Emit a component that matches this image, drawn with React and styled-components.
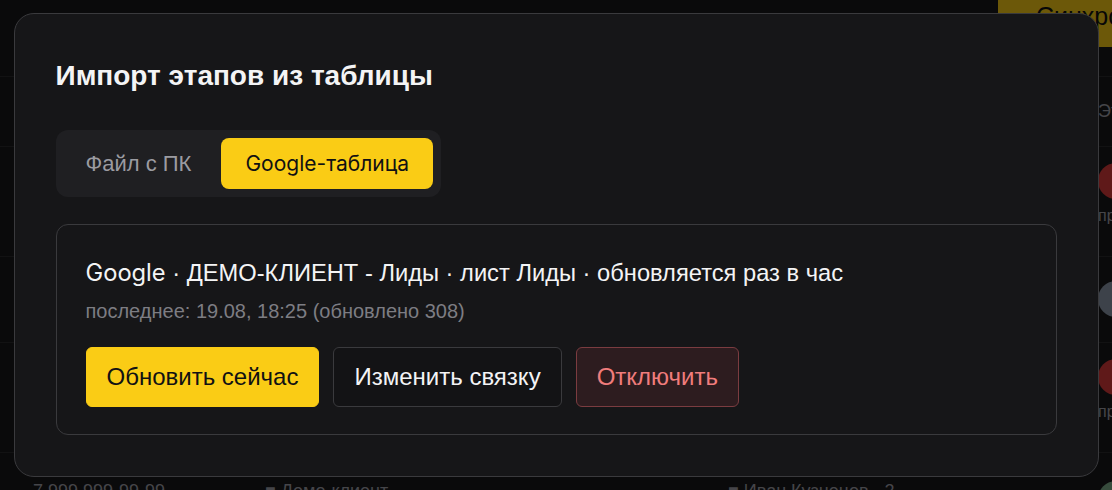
import React, { useState } from 'react';
import styled, { createGlobalStyle } from 'styled-components';
import { RefreshCw } from 'lucide-react';

const GlobalStyle = createGlobalStyle`
  html, body {
    margin: 0;
    padding: 0;
    background: #18181b;
    overflow: hidden;
  }
  body {
    font-family: "Liberation Sans", Arial, sans-serif;
    color: #f4f4f5;
  }
`;

/* --- page behind the dialog --- */

const Page = styled.div`
  width: 1240px;
  height: 490px;
  overflow: hidden;
  background: #18181b;
  display: flex;
  flex-direction: column;
  & > * {
    flex-shrink: 0;
  }
`;

const TopBar = styled.div`
  height: 77px;
  box-sizing: border-box;
  display: flex;
  align-items: flex-start;
  justify-content: flex-end;
  padding-right: 42px;
  border-bottom: 1px solid #2a2a2e;
`;

const SyncButton = styled.button`
  width: 200px;
  height: 47px;
  border: none;
  background: #facc15;
  color: #111;
  font-family: inherit;
  font-size: 25px;
  white-space: nowrap;
  overflow: hidden;
  display: flex;
  align-items: center;
  gap: 4px;
  padding: 0 0 14px 34px;
`;

const HeadRow = styled.div`
  height: 70px;
  box-sizing: border-box;
  display: grid;
  grid-template-columns: 1098px 1fr;
  align-items: center;
  border-bottom: 1px solid #2a2a2e;
  color: #a1a1aa;
  font-size: 18px;
`;

const Row = styled.div`
  height: ${p => p.$h}px;
  box-sizing: border-box;
  display: grid;
  grid-template-columns: 232px 463px 370px 1fr;
  padding-left: 33px;
  padding-top: ${p => p.$top}px;
  border-bottom: 1px solid #2a2a2e;
  font-size: 18px;
  color: #a1a1aa;
`;

const Cell = styled.div`
  white-space: nowrap;
`;

const Person = styled.div`
  display: flex;
  flex-direction: column;
  gap: 8px;
`;

const Avatar = styled.div`
  width: 36px;
  height: 36px;
  border-radius: 50%;
  background: ${p => p.$color};
`;

const Sub = styled.span`
  font-size: 16px;
  color: #a1a1aa;
`;

/* --- dialog --- */

const Overlay = styled.div`
  position: fixed;
  inset: 0;
  background: rgba(0, 0, 0, 0.57);
  display: flex;
  align-items: center;
  justify-content: center;
`;

const Dialog = styled.div`
  width: 1085px;
  height: 464px;
  box-sizing: border-box;
  background: #161618;
  border: 1px solid #3a3a3d;
  border-radius: 20px;
  padding: 37px 41px 40px 41px;
  display: flex;
  flex-direction: column;
`;

const Title = styled.h2`
  margin: 0;
  font-family: "Liberation Sans", Arial, sans-serif;
  font-weight: 700;
  font-size: 28px;
  line-height: 50px;
  color: #f4f4f5;
`;

const Tabs = styled.div`
  margin-top: 29px;
  align-self: flex-start;
  display: flex;
  gap: 8px;
  padding: 8px;
  background: #1f1f22;
  border-radius: 12px;
`;

const Tab = styled.button`
  height: 51px;
  border: none;
  border-radius: 8px;
  cursor: pointer;
  padding: 0 ${p => (p.$active ? 24 : 22)}px;
  font-size: ${p => (p.$active ? 21 : 22)}px;
  font-family: ${p => (p.$active ? 'Inter, "Liberation Sans", sans-serif' : '"Liberation Sans", Arial, sans-serif')};
  background: ${p => (p.$active ? '#facc15' : 'transparent')};
  color: ${p => (p.$active ? '#111113' : '#9b9ba1')};
`;

const Card = styled.div`
  margin-top: 27px;
  border: 1px solid #3a3a3d;
  border-radius: 12px;
  padding: 33px 29px 27px;
  display: flex;
  flex-direction: column;
`;

const Source = styled.div`
  font-size: 23.7px;
  line-height: 30px;
  color: #f4f4f5;
  white-space: nowrap;
`;

const Latin = styled.span`
  font-family: Inter, "Liberation Sans", sans-serif;
`;

const Meta = styled.div`
  margin-top: 11px;
  font-size: 20px;
  line-height: 24px;
  color: #7d7d83;
`;

const Actions = styled.div`
  margin-top: 24px;
  display: flex;
  gap: 14px;
`;

const tones = {
  primary: { bg: '#facc15', border: '#facc15', color: '#111113' },
  ghost: { bg: '#131315', border: '#3a3a3d', color: '#f4f4f5' },
  danger: { bg: '#2d1c1f', border: '#7b3c40', color: '#f07c7c' },
};

const ActionButton = styled.button`
  height: 60px;
  padding: 0 20px;
  border-radius: 6px;
  cursor: pointer;
  white-space: nowrap;
  font-family: "Liberation Sans", Arial, sans-serif;
  font-size: 24px;
  background: ${p => tones[p.$tone].bg};
  border: 1px solid ${p => tones[p.$tone].border};
  color: ${p => tones[p.$tone].color};
`;

export default function App() {
  const [mode, setMode] = useState('google');

  return (
    <>
      <GlobalStyle />
      <Page>
        <TopBar>
          <SyncButton>
            <RefreshCw size={16} strokeWidth={2.5} />
            Синхронизировать
          </SyncButton>
        </TopBar>
        <HeadRow>
          <span />
          <span>Этап</span>
        </HeadRow>
        <Row $h={110} $top={16}>
          <Cell>Иван Петров</Cell>
          <Cell>Новая заявка</Cell>
          <Cell>Сайт</Cell>
          <Person>
            <Avatar $color="#dc3a3a" />
            <Sub>продажи</Sub>
          </Person>
        </Row>
        <Row $h={86} $top={24}>
          <Cell>Мария Смирнова</Cell>
          <Cell>Переговоры</Cell>
          <Cell>Реклама</Cell>
          <Person>
            <Avatar $color="#8d9aab" />
          </Person>
        </Row>
        <Row $h={110} $top={16}>
          <Cell>Олег Кузнецов</Cell>
          <Cell>Счёт выставлен</Cell>
          <Cell>Звонок</Cell>
          <Person>
            <Avatar $color="#dc3a3a" />
            <Sub>продажи</Sub>
          </Person>
        </Row>
        <Row $h={110} $top={28}>
          <Cell>7 999 999-99-99</Cell>
          <Cell>■ Демо-клиент</Cell>
          <Cell>■ Иван Кузнецов · 2</Cell>
          <Person>
            <Avatar $color="#7fb08e" />
          </Person>
        </Row>
      </Page>

      <Overlay>
        <Dialog role="dialog">
          <Title>Импорт этапов из таблицы</Title>
          <Tabs>
            <Tab $active={mode === 'file'} onClick={() => setMode('file')}>Файл с ПК</Tab>
            <Tab $active={mode === 'google'} onClick={() => setMode('google')}>Google-таблица</Tab>
          </Tabs>
          <Card>
            <Source>
              <Latin>Google</Latin> · ДЕМО-КЛИЕНТ - Лиды · лист Лиды · обновляется раз в час
            </Source>
            <Meta>последнее: 19.08, 18:25 (обновлено 308)</Meta>
            <Actions>
              <ActionButton $tone="primary">Обновить сейчас</ActionButton>
              <ActionButton $tone="ghost">Изменить связку</ActionButton>
              <ActionButton $tone="danger">Отключить</ActionButton>
            </Actions>
          </Card>
        </Dialog>
      </Overlay>
    </>
  );
}
